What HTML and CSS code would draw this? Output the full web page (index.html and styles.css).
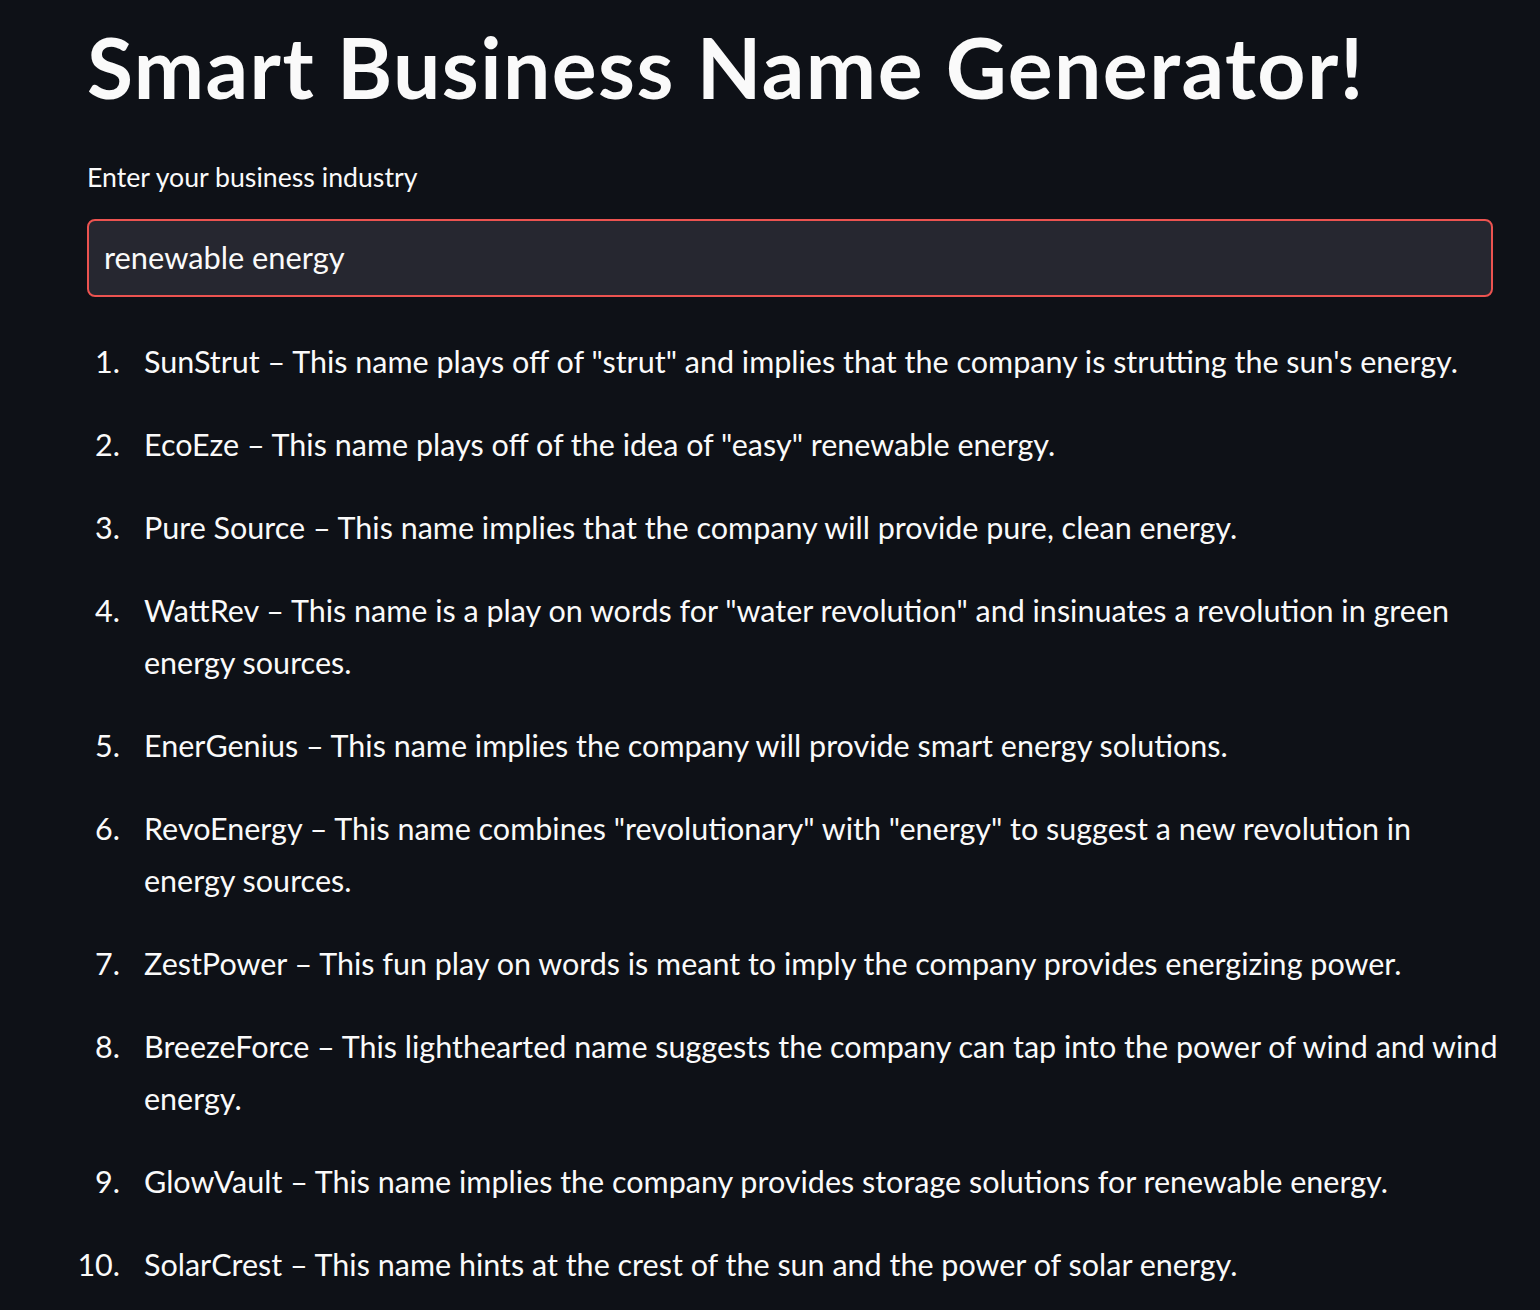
FILE: index.html
```html
<!DOCTYPE html>
<html lang="en">
<head>
<meta charset="utf-8">
<title>Smart Business Name Generator!</title>
<link rel="stylesheet" href="styles.css">
</head>
<body>
<main class="app">
  <h1 class="title">Smart Business Name Generator!</h1>
  <div class="field">
    <label class="field-label">Enter your business industry</label>
    <div class="field-input">renewable energy</div>
  </div>
  <ol class="names">
    <li>SunStrut – This name plays off of "strut" and implies that the company is strutting the sun's energy.</li>
    <li>EcoEze – This name plays off of the idea of "easy" renewable energy.</li>
    <li>Pure Source – This name implies that the company will provide pure, clean energy.</li>
    <li>WattRev – This name is a play on words for "water revolution" and insinuates a revolution in green energy sources.</li>
    <li>EnerGenius – This name implies the company will provide smart energy solutions.</li>
    <li>RevoEnergy – This name combines "revolutionary" with "energy" to suggest a new revolution in energy sources.</li>
    <li>ZestPower – This fun play on words is meant to imply the company provides energizing power.</li>
    <li>BreezeForce – This lighthearted name suggests the company can tap into the power of wind and wind energy.</li>
    <li>GlowVault – This name implies the company provides storage solutions for renewable energy.</li>
    <li>SolarCrest – This name hints at the crest of the sun and the power of solar energy.</li>
  </ol>
</main>
</body>
</html>
```
FILE: styles.css
```css
html, body {
  margin: 0;
  padding: 0;
  background: #0e1117;
}
body {
  color: #fafafa;
  font-family: "Lato", "Source Sans Pro", "Liberation Sans", sans-serif;
  overflow: hidden;
}
.app {
  width: 1420px;
  padding: 17px 0 0 87px;
  display: flex;
  flex-direction: column;
}
.title {
  margin: 0;
  font-size: 84px;
  font-weight: 700;
  line-height: 1.2;
  letter-spacing: 1.45px;
}
.field {
  margin-top: 43px;
  width: 1406px;
  display: flex;
  flex-direction: column;
}
.field-label {
  font-size: 26.7px;
  line-height: 32px;
}
.field-input {
  margin-top: 26px;
  height: 74px;
  box-sizing: content-box;
  border: 2px solid #ec5350;
  border-radius: 8px;
  background: #262730;
  padding: 0 15px;
  display: flex;
  align-items: center;
  font-size: 30.8px;
  line-height: 36px;
}
.names {
  list-style: none;
  counter-reset: item;
  margin: 38px 0 0 -30px;
  padding: 0;
  font-size: 30.5px;
  line-height: 52px;
  display: flex;
  flex-direction: column;
  gap: 31px;
}
.names li {
  counter-increment: item;
  display: grid;
  grid-template-columns: 87px 1fr;
}
.names li::before {
  content: counter(item) ".";
  text-align: right;
  padding-right: 24px;
}
```
